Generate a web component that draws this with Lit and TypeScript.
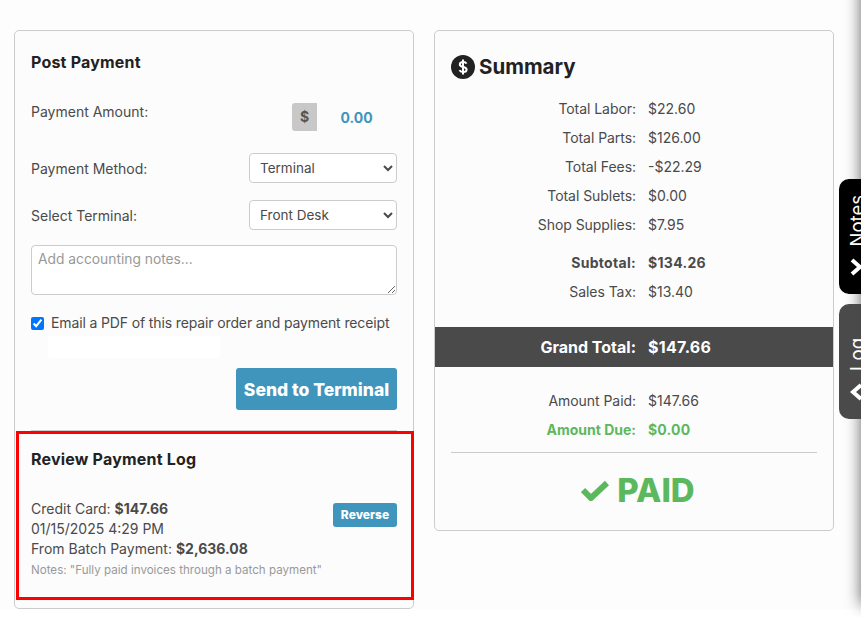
import { LitElement, html, css } from "lit";
import { customElement } from "lit/decorators.js";

@customElement("app-root")
export class AppRoot extends LitElement {
  static styles = css`
    :host { display: block; position: relative; width: 861px; height: 617px; overflow: hidden; background: #fff; font-family: Inter, "Noto Sans", sans-serif; font-size: 14px; color: #4a4a4a; }
    * { box-sizing: border-box; }
    .page { display: flex; align-items: flex-start; gap: 20px; padding: 30px 0 0 14px; height: 609px; background: #fdfdfd; }
    .card { background: #fcfcfc; border: 1px solid #ccc; border-radius: 5px; width: 400px; }
    .left { height: 579px; padding: 21px 16px 0; }
    h2 { margin: 0; color: #222; font-weight: 700; font-size: 16px; line-height: 20px; letter-spacing: .2px; }
    .row { display: flex; justify-content: space-between; align-items: center; }
    .amount { height: 28px; margin-top: 31px; }
    .amount .lbl { align-self: flex-start; line-height: 18px; }
    .amt { display: flex; width: 105px; }
    .dollar { width: 25px; height: 28px; background: #c8c8c8; border-radius: 3px 0 0 3px; font-weight: 700; display: flex; align-items: center; justify-content: center; color: #555; padding-bottom: 1px; }
    .val { color: #3f95bb; font-weight: 700; flex: 1; text-align: center; line-height: 29px; padding-right: 1px; }
    .sel { height: 30px; }
    select { width: 148px; height: 30px; border: 1px solid #ccc; border-radius: 4px; background: #fff; font: inherit; font-size: 13.5px; color: #4a4a4a; padding: 0 6px; }
    .m1 { margin-top: 22px; } .m2 { margin-top: 17px; }
    textarea { display: block; width: 100%; height: 50px; margin-top: 15px; border: 1px solid #ccc; border-radius: 4px; background: #fff; font: inherit; font-size: 13.8px; padding: 5px 6px; }
    textarea::placeholder { color: #999; }
    .check { display: flex; align-items: center; gap: 7px; margin-top: 19px; line-height: 18px; letter-spacing: -.13px; }
    .check input { margin: 0; width: 13px; height: 13px; accent-color: #0075ff; }
    .smudge { width: 172px; height: 22px; margin: 4px 0 0 17px; background: #fff; border-radius: 4px; }
    .actions { display: flex; justify-content: flex-end; margin-top: 10px; }
    .btn { border: 0; background: #3f95bb; color: #fff; font: inherit; font-weight: 800; border-radius: 3px; padding: 0; }
    .send { width: 161px; height: 42px; font-size: 17.5px; }
    .rule { height: 1px; background: #ccc; margin-top: 20px; }
    .log { margin: 0 -17px 0 -15px; height: 169px; border: 3px solid #f00; padding: 15px 14px 0 12px; }
    .entry { display: flex; justify-content: space-between; align-items: flex-start; margin-top: 30px; line-height: 20px; }
    .rev { width: 64px; height: 24px; font-size: 12px; margin-top: 4px; }
    .note { font-size: 11.6px; color: #999; line-height: 14px; margin-top: 4px; }
    b { font-weight: 700; }
    .right { height: 501px; padding: 23px 0 0; }
    .title { display: flex; align-items: center; gap: 4px; padding-left: 16px; color: #222; font-size: 20.5px; font-weight: 700; line-height: 26px; }
    .rows { margin-top: 20px; }
    .t { display: grid; grid-template-columns: 201px 1fr; column-gap: 12px; line-height: 18px; }
    .t span:first-child { text-align: right; letter-spacing: -.05px; }
    .t + .t { margin-top: 11px; }
    .t.bold { font-weight: 700; margin-top: 20px; letter-spacing: .3px; }
    .t.bold span:first-child { letter-spacing: .3px; }
    .grand { margin-top: 26px; height: 40px; background: #4a4a4a; color: #fff; font-size: 16px; font-weight: 700; align-items: center; letter-spacing: .3px; }
    .grand span:first-child { letter-spacing: 0; }
    .t.paid { margin-top: 25px; }
    .t.due { color: #5cb85c; font-weight: 700; margin-top: 11px; letter-spacing: .2px; }
    .t.due span:first-child { letter-spacing: 0; }
    .rule2 { margin: 13px 16px 0; height: 1px; background: #ccc; }
    .stamp { display: flex; justify-content: center; align-items: center; gap: 8px; margin-top: 17px; padding-left: 8px; color: #5cb85c; font-size: 33px; font-weight: 800; line-height: 40px; }
    .shadow { position: absolute; top: -20px; left: 861px; width: 20px; height: 625px; box-shadow: 0 0 16px rgba(0,0,0,.6); }
    .tab { position: absolute; left: 839px; width: 30px; border-radius: 10px 0 0 10px; color: #fff; overflow: hidden; }
    .tab.n { top: 179px; height: 115px; background: #000; }
    .tab.l { top: 304px; height: 115px; background: #4a4a4a; }
    .tab span { position: absolute; left: 9px; bottom: 48px; writing-mode: vertical-rl; transform: rotate(180deg); font-size: 18.5px; line-height: 18px; }
    .tab svg { position: absolute; left: 11px; bottom: 17px; }
  `;

  render() {
    return html`
      <div class="page">
        <section class="card left">
          <h2>Post Payment</h2>
          <div class="row amount"><span class="lbl">Payment Amount:</span>
            <div class="amt"><span class="dollar">$</span><span class="val">0.00</span></div></div>
          <div class="row sel m1"><span>Payment Method:</span><select><option>Terminal</option></select></div>
          <div class="row sel m2"><span>Select Terminal:</span><select><option>Front Desk</option></select></div>
          <textarea placeholder="Add accounting notes..."></textarea>
          <label class="check"><input type="checkbox" checked /><span>Email a PDF of this repair order and payment receipt</span></label>
          <div class="smudge"></div>
          <div class="actions"><button class="btn send">Send to Terminal</button></div>
          <div class="rule"></div>
          <div class="log">
            <h2>Review Payment Log</h2>
            <div class="entry">
              <div>Credit Card: <b>$147.66</b><br />01/15/2025 4:29 PM<br />From Batch Payment: <b>$2,636.08</b>
                <div class="note">Notes: "Fully paid invoices through a batch payment"</div></div>
              <button class="btn rev">Reverse</button>
            </div>
          </div>
        </section>
        <section class="card right">
          <div class="title">
            <svg width="24" height="24" viewBox="0 0 24 24"><circle cx="12" cy="12" r="12" fill="#222"/><path d="M15.5 8.6c-.5-1-1.8-1.600-3.400-1.600-1.900 0-3.300 1-3.300 2.500 0 3.300 6.800 1.800 6.800 5 0 1.500-1.500 2.500-3.500 2.500-1.800 0-3.100-.7-3.600-1.800" fill="none" stroke="#fff" stroke-width="2"/><path d="M12 4.500v15" stroke="#fff" stroke-width="2"/></svg>
            <span>Summary</span></div>
          <div class="rows">
            <div class="t"><span>Total Labor:</span><span>$22.60</span></div>
            <div class="t"><span>Total Parts:</span><span>$126.00</span></div>
            <div class="t"><span>Total Fees:</span><span>-$22.29</span></div>
            <div class="t"><span>Total Sublets:</span><span>$0.00</span></div>
            <div class="t"><span>Shop Supplies:</span><span>$7.95</span></div>
            <div class="t bold"><span>Subtotal:</span><span>$134.26</span></div>
            <div class="t"><span>Sales Tax:</span><span>$13.40</span></div>
          </div>
          <div class="t grand"><span>Grand Total:</span><span>$147.66</span></div>
          <div class="t paid"><span>Amount Paid:</span><span>$147.66</span></div>
          <div class="t due"><span>Amount Due:</span><span>$0.00</span></div>
          <div class="rule2"></div>
          <div class="stamp">
            <svg width="28" height="22" viewBox="0 0 28 22"><path d="M2 11l8 8L26 4" fill="none" stroke="#5cb85c" stroke-width="6"/></svg>
            <span>PAID</span></div>
        </section>
      </div>
      <div class="shadow"></div>
      <div class="tab n"><span>Notes</span><svg width="14" height="20" viewBox="0 0 14 20"><path d="M2 3l8 7-8 7" fill="none" stroke="#fff" stroke-width="4"/></svg></div>
      <div class="tab l"><span>Log</span><svg width="14" height="20" viewBox="0 0 14 20"><path d="M11 3l-8 7 8 7" fill="none" stroke="#fff" stroke-width="4"/></svg></div>
    `;
  }
}
